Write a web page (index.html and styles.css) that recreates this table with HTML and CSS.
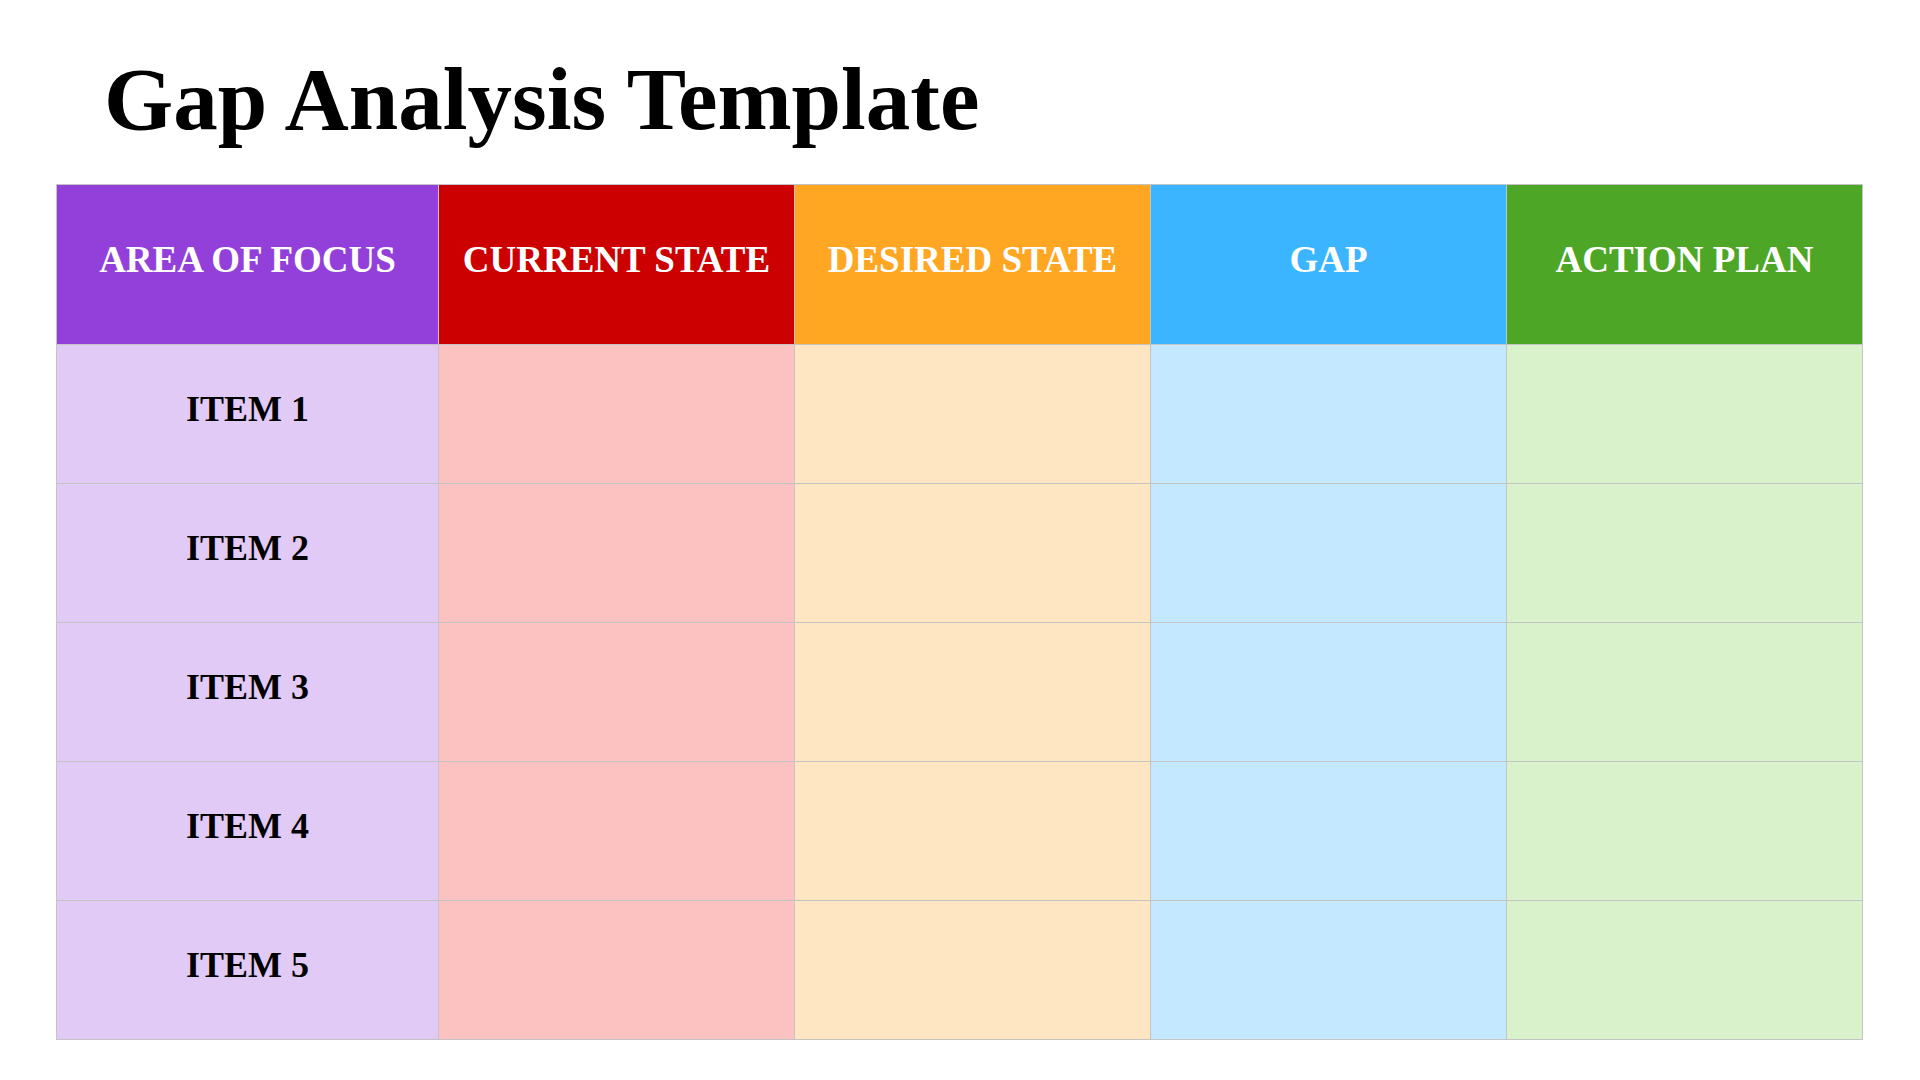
FILE: index.html
```html
<!DOCTYPE html>
<html>
<head>
<meta charset="utf-8">
<link rel="stylesheet" href="styles.css">
</head>
<body>
<div class="page">
  <h1 class="title">Gap Analysis Template</h1>
  <table class="gap">
    <colgroup>
      <col class="c1"><col class="cn"><col class="cn"><col class="cn"><col class="cn">
    </colgroup>
    <thead>
      <tr>
        <th class="h-purple">AREA OF FOCUS</th>
        <th class="h-red">CURRENT STATE</th>
        <th class="h-orange">DESIRED STATE</th>
        <th class="h-blue">GAP</th>
        <th class="h-green">ACTION PLAN</th>
      </tr>
    </thead>
    <tbody>
      <tr><td class="l-purple">ITEM 1</td><td class="l-red"></td><td class="l-orange"></td><td class="l-blue"></td><td class="l-green"></td></tr>
      <tr><td class="l-purple">ITEM 2</td><td class="l-red"></td><td class="l-orange"></td><td class="l-blue"></td><td class="l-green"></td></tr>
      <tr><td class="l-purple">ITEM 3</td><td class="l-red"></td><td class="l-orange"></td><td class="l-blue"></td><td class="l-green"></td></tr>
      <tr><td class="l-purple">ITEM 4</td><td class="l-red"></td><td class="l-orange"></td><td class="l-blue"></td><td class="l-green"></td></tr>
      <tr><td class="l-purple">ITEM 5</td><td class="l-red"></td><td class="l-orange"></td><td class="l-blue"></td><td class="l-green"></td></tr>
    </tbody>
  </table>
</div>
</body>
</html>
```
FILE: styles.css
```css
html, body {
  margin: 0;
  padding: 0;
  background: #ffffff;
}
.page {
  width: 1920px;
  height: 1080px;
  padding: 0 58px 0 56px;
  box-sizing: border-box;
  font-family: "Liberation Serif", "Times New Roman", serif;
}
.title {
  margin: 0;
  padding: 49px 0 0 48px;
  height: 184px;
  box-sizing: border-box;
  font-size: 89px;
  line-height: 100px;
  font-weight: bold;
  color: #000;
  white-space: nowrap;
}
.gap {
  width: 1806px;
  border-collapse: collapse;
  table-layout: fixed;
}
.c1 { width: 382px; }
.cn { width: 356px; }
.gap th, .gap td {
  border: 1px solid #c4c4c4;
  text-align: center;
  vertical-align: middle;
  font-weight: bold;
  padding: 0 0 10px 0;
  box-sizing: border-box;
}
.gap th {
  height: 160px;
  color: #ffffff;
  font-size: 37px;
}
.gap td {
  height: 139px;
  color: #000;
  font-size: 36px;
}
.h-purple { background: #9340db; }
.h-red { background: #cc0000; }
.h-orange { background: #ffa622; }
.h-blue { background: #3bb5ff; }
.h-green { background: #4ea626; }
.l-purple { background: #e2caf6; }
.l-red { background: #fcc2c2; }
.l-orange { background: #ffe6c3; }
.l-blue { background: #c4e8ff; }
.l-green { background: #daf2cc; }
```
